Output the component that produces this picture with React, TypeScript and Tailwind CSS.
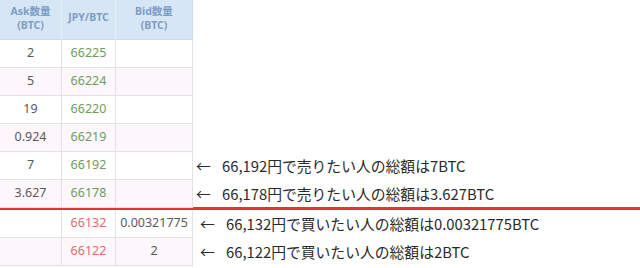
import React from "react";

type Row = { ask: string; price: string; bid: string; side: "ask" | "bid"; note?: string };

const rows: Row[] = [
  { ask: "2", price: "66225", bid: "", side: "ask" },
  { ask: "5", price: "66224", bid: "", side: "ask" },
  { ask: "19", price: "66220", bid: "", side: "ask" },
  { ask: "0.924", price: "66219", bid: "", side: "ask" },
  { ask: "7", price: "66192", bid: "", side: "ask", note: "66,192円で売りたい人の総額は7BTC" },
  { ask: "3.627", price: "66178", bid: "", side: "ask", note: "66,178円で売りたい人の総額は3.627BTC" },
  { ask: "", price: "66132", bid: "0.00321775", side: "bid", note: "66,132円で買いたい人の総額は0.00321775BTC" },
  { ask: "", price: "66122", bid: "2", side: "bid", note: "66,122円で買いたい人の総額は2BTC" },
];

const tableFont = { fontFamily: '"Noto Sans", "Noto Sans CJK JP", sans-serif' };
const noteFont = { fontFamily: '"Noto Sans CJK JP", "Noto Sans", sans-serif' };

function BookRow({ row, i }: { row: Row; i: number }) {
  const bg = i % 2 === 1 ? "bg-[#fdf7fb]" : "bg-white";
  const priceColor = row.side === "ask" ? "text-[#6e9c5f]" : "text-[#e26a6a]";
  return (
    <div className="flex h-[28px] items-center">
      <div className={`flex h-full w-[193px] shrink-0 border-b border-[#e3e3e3] text-[12.5px] text-[#5a5a5a] ${bg}`} style={tableFont}>
        <div className="flex w-[62px] items-center justify-center border-r border-[#e3e3e3]">{row.ask}</div>
        <div className={`flex w-[54px] items-center justify-center border-r border-[#e3e3e3] ${priceColor}`}>{row.price}</div>
        <div className="flex w-[77px] items-center justify-center border-r border-[#e3e3e3]">{row.bid}</div>
      </div>
      {row.note && (
        <div
          className={`flex items-center text-[14.8px] text-[#2a2a2a] ${row.side === "ask" ? "pl-[3px]" : "pl-[7px]"}`}
          style={noteFont}
        >
          <span className="w-[26px]">←</span>
          <span>{row.note}</span>
        </div>
      )}
    </div>
  );
}

export default function App() {
  return (
    <div className="h-[268px] w-[640px] overflow-hidden bg-white">
      <div
        className="flex h-[40px] w-[193px] border-b border-r border-[#cfdcea] bg-[#d7e6f5] text-[10.5px] font-bold leading-[14px] text-[#7c9dc6]"
        style={tableFont}
      >
        <div className="flex w-[62px] flex-col items-center justify-center border-r border-[#e6eff9] pb-[4px]">
          <span>Ask数量</span>
          <span>(BTC)</span>
        </div>
        <div className="flex w-[54px] items-center justify-center border-r border-[#e6eff9] pb-[6px]">JPY/BTC</div>
        <div className="flex w-[76px] flex-col items-center justify-center pb-[4px]">
          <span>Bid数量</span>
          <span>(BTC)</span>
        </div>
      </div>
      {rows.slice(0, 6).map((r, i) => (
        <BookRow key={r.price} row={r} i={i} />
      ))}
      <div className="-mt-[1px] h-[3px] w-full bg-[#e8303a]" />
      {rows.slice(6).map((r, i) => (
        <BookRow key={r.price} row={r} i={i + 6} />
      ))}
    </div>
  );
}
